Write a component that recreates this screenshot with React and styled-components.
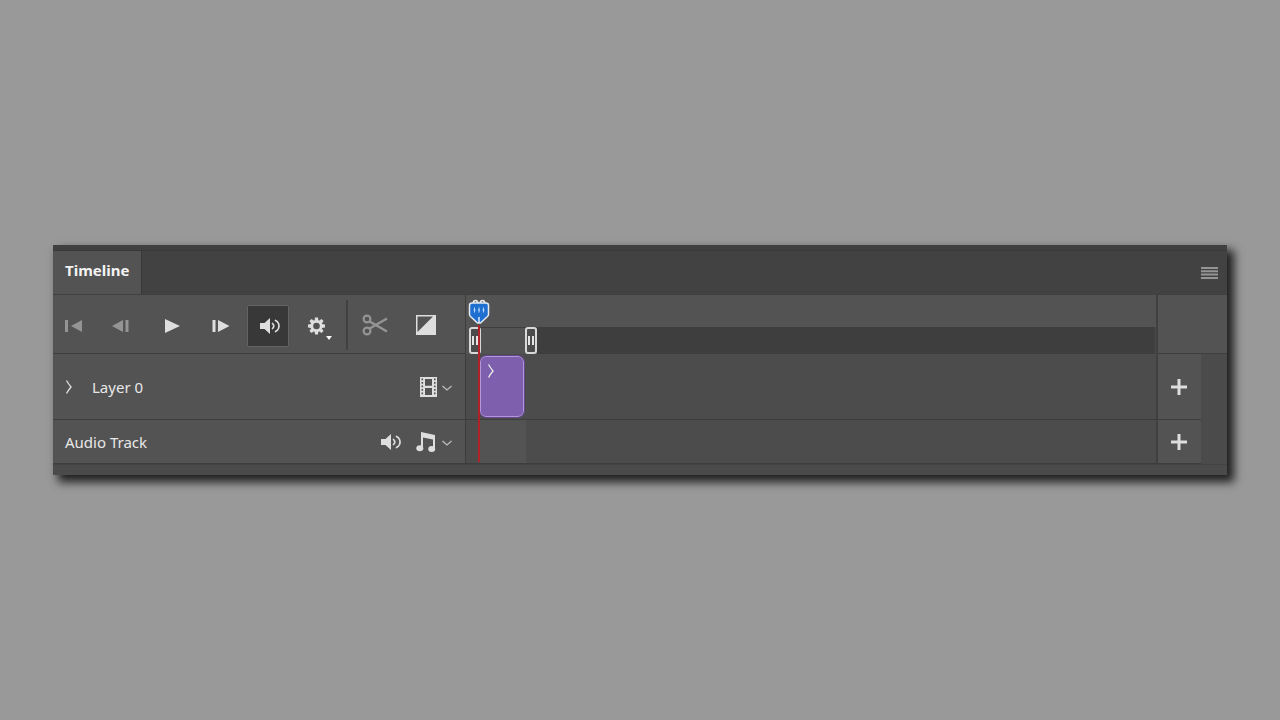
import React from 'react';
import styled, { createGlobalStyle } from 'styled-components';

const GlobalStyle = createGlobalStyle`
    * {
        box-sizing: border-box;
    }

    body {
        margin: 0;
        background: #999999;
        font-family: "Noto Sans", "Open Sans", sans-serif;
        font-size: 15px;
        line-height: 20px;
        color: #e8e8e8;
    }
`;

const Page = styled.main`
    padding: 245px 53px;
`;

const Panel = styled.section`
    border-top: 5px solid #404040;
    background: #4b4b4b;
    box-shadow: 6px 6px 9px 1px rgba(0, 0, 0, 0.8);
`;

const TabBar = styled.header`
    display: flex;
    justify-content: space-between;
    height: 44px;
    background: #424242;
    border-top: 1px solid #393939;
`;

const Tab = styled.h1`
    margin: 0;
    padding: 9px 12px;
    background: #535353;
    border-right: 1px solid #383838;
    font-size: 15px;
    line-height: 20px;
    font-weight: 700;
    color: #f2f2f2;
`;

const IconButton = styled.button`
    display: flex;
    align-items: center;
    justify-content: center;
    flex: none;
    width: ${({ $width }) => $width || 42}px;
    height: ${({ $height }) => $height || 42}px;
    padding: 0;
    border: 1px solid ${({ $active }) => ($active ? '#636363' : 'transparent')};
    border-radius: 2px;
    background: ${({ $active }) => ($active ? '#383838' : 'transparent')};
    color: ${({ $dim }) => ($dim ? '#949494' : '#dedede')};

    svg {
        flex: none;
    }
`;

const Body = styled.div`
    display: flex;
`;

const Labels = styled.div`
    flex: none;
    width: 413px;
    background: #535353;
    border-right: 1px solid #3d3d3d;
`;

const Tracks = styled.div`
    position: relative;
    flex: 1;
`;

const Actions = styled.div`
    flex: none;
    width: 71px;
    border-left: 2px solid #404040;
`;

const Toolbar = styled.div`
    display: flex;
    gap: 6px;
    height: 60px;
    padding: 10px 0 0 2px;
    border-top: 1px solid #404040;
    border-bottom: 1px solid #3e3e3e;
`;

const Separator = styled.div`
    width: 2px;
    height: 50px;
    margin: -5px 0 0 3px;
    background: #414141;
`;

const LabelRow = styled.div`
    display: flex;
    align-items: center;
    height: ${({ $height }) => $height}px;
    padding: 0 12px;
    border-bottom: 1px solid #3e3e3e;
`;

const RowTitle = styled.span`
    flex: 1;
    padding-left: ${({ $indent }) => ($indent ? 19 : 0)}px;
`;

const Ruler = styled.div`
    height: 33px;
    background: #535353;
    border-top: 1px solid #404040;
`;

const RangeBar = styled.div`
    display: flex;
    height: 27px;
    margin-right: 1px;
    background: #3e3e3e;
`;

const RangeLead = styled.div`
    width: 3px;
    background: #535353;
`;

const WorkArea = styled.div`
    display: flex;
    justify-content: space-between;
    width: 68px;
    background: #535353;
    border-top: 1px solid #3e3e3e;
`;

const Grip = styled.div`
    display: flex;
    align-items: center;
    justify-content: center;
    gap: 2px;
    width: 12px;
    height: 27px;
    margin-top: -1px;
    border: 2px solid #d8d8d8;
    border-radius: 3px;
    background: #4b4b4b;

    &::before,
    &::after {
        content: "";
        width: 2px;
        height: 9px;
        background: #e4e4e4;
    }
`;

const TrackRow = styled.div`
    display: flex;
    height: ${({ $height }) => $height}px;
    padding-left: 13px;
    background: #4c4c4c;
    border-bottom: 1px solid #3d3d3d;
`;

const Clip = styled.div`
    width: 44px;
    height: 61px;
    margin: 2px 0 0 1px;
    padding: 6px;
    border: 1px solid #b596dd;
    border-radius: 6px;
    background: #7d5fad;
    outline: 1px solid #62478d;

    svg {
        display: block;
    }
`;

const EmptyClip = styled.div`
    width: 47px;
    background: #535353;
`;

const Playhead = styled.div`
    position: absolute;
    top: 5px;
    left: 2px;
    display: flex;
    flex-direction: column;
    align-items: center;
    width: 22px;
    height: 163px;
`;

const PlayheadLine = styled.div`
    flex: 1;
    width: 2px;
    background: #b02228;
`;

const ActionsTop = styled.div`
    height: 60px;
    background: #535353;
    border-top: 1px solid #404040;
    border-bottom: 1px solid #3e3e3e;
`;

const ActionCell = styled.div`
    display: flex;
    align-items: center;
    height: ${({ $height }) => $height}px;
    width: 43px;
    background: #535353;
    border-bottom: 1px solid #3e3e3e;
`;

const BottomStrip = styled.footer`
    height: 11px;
    background: #4b4b4b;
    border-top: 1px solid #444444;
`;

const Icon = ({ size = 32, height, children }) => (
    <svg
        width={size}
        height={height || size}
        viewBox={`0 0 ${size} ${height || size}`}
        fill="currentColor"
        aria-hidden="true"
    >
        {children}
    </svg>
);

const FirstFrameIcon = () => (
    <Icon>
        <path d="M5 10h3v12H5zM22 10v12l-11-6z" />
    </Icon>
);

const PrevFrameIcon = () => (
    <Icon>
        <path d="M4 16l11-6v12zM17.500 10h3v12h-3z" />
    </Icon>
);

const PlayIcon = () => (
    <Icon>
        <path d="M9 9l15 7-15 7z" />
    </Icon>
);

const NextFrameIcon = () => (
    <Icon>
        <path d="M8.500 10h3v12h-3zM14 10l11.500 6L14 22z" />
    </Icon>
);

const SpeakerShape = () => (
    <>
        <path d="M0 5h4.500L10 0v16l-5.500-5H0z" />
        <g fill="none" stroke="currentColor" strokeWidth="1.700" strokeLinecap="round">
            <path d="M12.500 5.500q2.600 2.500 0 5" />
            <path d="M15.500 2.500q2 .8 3 3 1 2.500 0 5-1 2.200-3 3" />
        </g>
    </>
);

const teeth = [0, 45, 90, 135, 180, 225, 270, 315];

const GearIcon = () => (
    <Icon>
        <circle cx="16.500" cy="16" r="4.700" fill="none" stroke="currentColor" strokeWidth="2.800" />
        {teeth.map((angle) => (
            <path key={angle} d="M15 7.500h3l.5 3.500h-4z" transform={`rotate(${angle} 16.500 16)`} />
        ))}
        <path d="M26 26h6l-3 4z" fill="#ffffff" />
    </Icon>
);

const ScissorsIcon = () => (
    <Icon>
        <g fill="none" stroke="currentColor" strokeWidth="2.200">
            <circle cx="8" cy="9" r="3.400" />
            <circle cx="8" cy="21" r="3.400" />
            <path d="M10.700 11.500L28 21.500M10.700 18.500L28 8.500" strokeWidth="2.500" />
        </g>
    </Icon>
);

const TransitionIcon = () => (
    <Icon>
        <path d="M9 5h20v20H9zM10.500 6.500v15.500l15.500-15.500z" fillRule="evenodd" />
    </Icon>
);

const MenuIcon = () => (
    <Icon size={17} height={12}>
        <path d="M0 0h17v2H0zM0 3.300h17v2H0zM0 6.600h17v2H0zM0 10h17v2H0z" />
    </Icon>
);

const ExpandIcon = () => (
    <Icon size={8} height={16}>
        <path d="M1.500 1.500Q3.500 5 6 8q-2.500 3-4.500 6.500" fill="none" stroke="currentColor" strokeWidth="1.300" />
    </Icon>
);

const ChevronDownIcon = () => (
    <Icon size={12}>
        <path d="M1.500 5l4.500 4 4.500-4" fill="none" stroke="#bdbdbd" strokeWidth="1.300" />
    </Icon>
);

const FilmIcon = () => (
    <Icon size={20}>
        <path
            fillRule="evenodd"
            d="M2 0h17v20H2zM7 2v6.800h7V2zM7 11v7h7v-7zM3.500 1.500v1.800h1.600V1.500zM3.500 5v1.800h1.600V5zM3.500 8.500v1.800h1.600V8.500zM3.500 12v1.800h1.600V12zM3.500 15.500v1.800h1.600v-1.800zM16 1.500v1.800h1.600V1.500zM16 5v1.800h1.600V5zM16 8.500v1.800h1.600V8.500zM16 12v1.800h1.600V12zM16 15.500v1.800h1.600v-1.800z"
        />
    </Icon>
);

const MusicIcon = () => (
    <Icon size={20}>
        <path d="M5 0l14 3v14h-2V7.500L7 5.500V16H5z" />
        <ellipse cx="3.800" cy="16.200" rx="3.500" ry="3" />
        <ellipse cx="15.700" cy="17" rx="3.500" ry="3" />
    </Icon>
);

const PlusIcon = () => (
    <Icon size={16}>
        <path d="M6.500 0h3v6.500H16v3H9.500V16h-3V9.500H0v-3h6.500z" />
    </Icon>
);

const PlayheadMarker = () => (
    <Icon size={22} height={26}>
        <path d="M5 5q0-3.500 2.500-3.500T10 5M12 5q0-3.500 2.500-3.500T17 5" fill="none" stroke="#e9e9e9" strokeWidth="1.500" />
        <path
            d="M4 4h14q2.500 0 2.500 2.500v9q0 1-1 2L12.500 24h-3l-7-6.500q-1-1-1-2v-9Q1.500 4 4 4z"
            fill="#1f6fd0"
            stroke="#e3e9f2"
            strokeWidth="1.500"
        />
        <path d="M6.500 8.500v5M11 8.500v5M15.500 8.500v5M5.500 11h2M10 11h2M14.500 11h2" stroke="#b9d9ff" strokeWidth="1" />
        <path d="M11 18v6" stroke="#dbe9fb" strokeWidth="1.500" />
    </Icon>
);

const App = () => {
    return (
        <>
            <GlobalStyle />
            <Page>
                <Panel>
                    <TabBar>
                        <Tab>Timeline</Tab>
                        <IconButton $width={36} $height={44} $dim aria-label="Panel menu">
                            <MenuIcon />
                        </IconButton>
                    </TabBar>
                    <Body>
                        <Labels>
                            <Toolbar>
                                <IconButton $dim aria-label="First frame"><FirstFrameIcon /></IconButton>
                                <IconButton $dim aria-label="Previous frame"><PrevFrameIcon /></IconButton>
                                <IconButton aria-label="Play"><PlayIcon /></IconButton>
                                <IconButton aria-label="Next frame"><NextFrameIcon /></IconButton>
                                <IconButton $active aria-label="Audio playback">
                                    <Icon>
                                        <g transform="translate(8 8)"><SpeakerShape /></g>
                                    </Icon>
                                </IconButton>
                                <IconButton aria-label="Playback options"><GearIcon /></IconButton>
                                <Separator />
                                <IconButton $dim aria-label="Split at playhead"><ScissorsIcon /></IconButton>
                                <IconButton aria-label="Transitions"><TransitionIcon /></IconButton>
                            </Toolbar>
                            <LabelRow $height={66}>
                                <IconButton $width={8} $height={20} aria-label="Expand layer"><ExpandIcon /></IconButton>
                                <RowTitle $indent>Layer 0</RowTitle>
                                <IconButton $width={26} $height={24} aria-label="Video track"><FilmIcon /></IconButton>
                                <IconButton $width={12} $height={24} aria-label="Video track options"><ChevronDownIcon /></IconButton>
                            </LabelRow>
                            <LabelRow $height={44}>
                                <RowTitle>Audio Track</RowTitle>
                                <IconButton $width={40} $height={24} aria-label="Mute audio track">
                                    <Icon size={20} height={16}><SpeakerShape /></Icon>
                                </IconButton>
                                <IconButton $width={30} $height={24} aria-label="Audio clip"><MusicIcon /></IconButton>
                                <IconButton $width={12} $height={24} aria-label="Audio track options"><ChevronDownIcon /></IconButton>
                            </LabelRow>
                        </Labels>
                        <Tracks>
                            <Ruler />
                            <RangeBar>
                                <RangeLead />
                                <WorkArea>
                                    <Grip />
                                    <Grip />
                                </WorkArea>
                            </RangeBar>
                            <TrackRow $height={66}>
                                <Clip>
                                    <ExpandIcon />
                                </Clip>
                            </TrackRow>
                            <TrackRow $height={44}>
                                <EmptyClip />
                            </TrackRow>
                            <Playhead>
                                <PlayheadMarker />
                                <PlayheadLine />
                            </Playhead>
                        </Tracks>
                        <Actions>
                            <ActionsTop />
                            <ActionCell $height={66}>
                                <IconButton aria-label="Add media"><PlusIcon /></IconButton>
                            </ActionCell>
                            <ActionCell $height={44}>
                                <IconButton aria-label="Add audio"><PlusIcon /></IconButton>
                            </ActionCell>
                        </Actions>
                    </Body>
                    <BottomStrip />
                </Panel>
            </Page>
        </>
    );
};

export default App;
